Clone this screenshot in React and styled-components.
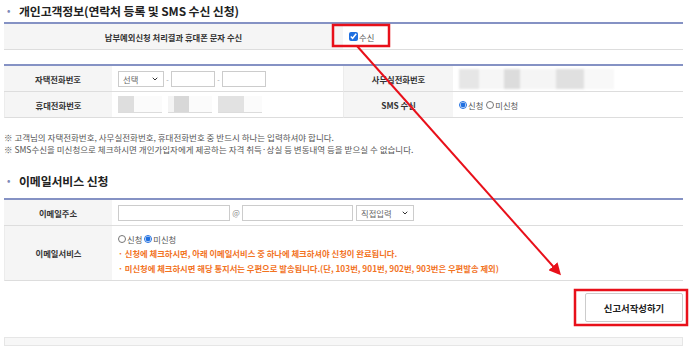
import React from 'react';
import styled, { createGlobalStyle } from 'styled-components';
import { ChevronDown } from 'lucide-react';

const GlobalStyle = createGlobalStyle`
  html, body {
    margin: 0;
    padding: 0;
    background: #ffffff;
  }
  body {
    font-family: "Noto Sans CJK KR", "Noto Sans", sans-serif;
    color: #333333;
    overflow: hidden;
  }
`;

const App = () => {
  return (
    <>
      <GlobalStyle />
      <Page>
        <SectionTitle>
          <Bullet>•</Bullet>개인고객정보(연락처 등록 및 SMS 수신 신청)
        </SectionTitle>

        <Table $cols="339px 1fr">
          <Label>납부예외신청 처리결과 휴대폰 문자 수신</Label>
          <Value>
            <Check type="checkbox" defaultChecked />
            <span>수신</span>
          </Value>
        </Table>

        <Table $cols="108px 231px 110px 1fr" $mt={14}>
          <Label>자택전화번호</Label>
          <Value>
            <FakeSelect $w={46}>
              선택
              <ChevronDown size={8} strokeWidth={3} color="#333" />
            </FakeSelect>
            <Dash>-</Dash>
            <TextBox $w={44} />
            <Dash>-</Dash>
            <TextBox $w={44} />
          </Value>
          <Label>사무실전화번호</Label>
          <Value>
            <BlurStrip>
              <Patch $w={20} $tone="#e6e6e6" />
              <Patch $w={25} $tone="#f6f6f6" />
              <Patch $w={16} $tone="#dcdcdc" />
              <Patch $w={36} $tone="#f5f5f5" />
              <Patch $w={28} $tone="#e0e0e0" />
              <Patch $w={30} $tone="#f8f8f8" />
            </BlurStrip>
          </Value>
          <Label>휴대전화번호</Label>
          <Value>
            <BlurBox $w={44}>
              <Patch $w={16} $tone="#dedede" />
            </BlurBox>
            <Gap />
            <BlurBox $w={44}>
              <Patch $w={6} $tone="#f4f4f4" />
              <Patch $w={15} $tone="#d8d8d8" />
            </BlurBox>
            <Gap />
            <BlurBox $w={44}>
              <Patch $w={26} $tone="#e2e2e2" />
            </BlurBox>
          </Value>
          <Label>SMS 수신</Label>
          <Value>
            <Radio type="radio" name="sms" defaultChecked />
            <span>신청</span>
            <Radio type="radio" name="sms" $ml={3} />
            <span>미신청</span>
          </Value>
        </Table>

        <Notes>
          <p>※ 고객님의 자택전화번호, 사무실전화번호, 휴대전화번호 중 반드시 하나는 입력하셔야 합니다.</p>
          <p>※ SMS수신을 미신청으로 체크하시면 개인가입자에게 제공하는 자격 취득·상실 등 변동내역 등을 받으실 수 없습니다.</p>
        </Notes>

        <SectionTitle $mt={15} $h={28}>
          <Bullet>•</Bullet>이메일서비스 신청
        </SectionTitle>

        <Table $cols="108px 1fr">
          <Label>이메일주소</Label>
          <Value>
            <TextBox $w={112} />
            <At>@</At>
            <TextBox $w={111} />
            <FakeSelect $w={58} $ml={3}>
              직접입력
              <ChevronDown size={8} strokeWidth={3} color="#333" />
            </FakeSelect>
          </Value>
          <Label>이메일서비스</Label>
          <Value $stack>
            <OptionLine>
              <Radio type="radio" name="mail" />
              <span>신청</span>
              <Radio type="radio" name="mail" $ml={2} defaultChecked />
              <span>미신청</span>
            </OptionLine>
            <Warn>· 신청에 체크하시면, 아래 이메일서비스 중 하나에 체크하셔야 신청이 완료됩니다.</Warn>
            <Warn>· 미신청에 체크하시면 해당 통지서는 우편으로 발송됩니다.(단, 103번, 901번, 902번, 903번은 우편발송 제외)</Warn>
          </Value>
        </Table>

        <ButtonRow>
          <SubmitButton>신고서작성하기</SubmitButton>
        </ButtonRow>

        <BottomBox />

        <Overlay width="700" height="346" viewBox="0 0 700 346">
          <defs>
            <marker id="head" markerWidth="6" markerHeight="6" refX="4.5" refY="3" orient="auto" markerUnits="strokeWidth">
              <path d="M0,0 L6,3 L0,6 Z" fill="#e8101a" />
            </marker>
          </defs>
          <rect x="333" y="25" width="56" height="21" fill="none" stroke="#e8101a" strokeWidth="2.5" />
          <line x1="357" y1="46" x2="559" y2="273" stroke="#e8101a" strokeWidth="2" markerEnd="url(#head)" />
          <rect x="575" y="290" width="112" height="35" fill="none" stroke="#e8101a" strokeWidth="2.5" />
        </Overlay>
      </Page>
    </>
  );
};

const Page = styled.div`
  position: relative;
  width: 679px;
  height: 346px;
  padding-left: 4px;
  display: flex;
  flex-direction: column;
`;

const SectionTitle = styled.h2`
  margin: ${(p) => p.$mt || 0}px 0 0 0;
  height: ${(p) => p.$h || 22}px;
  display: flex;
  align-items: ${(p) => (p.$h ? 'flex-start' : 'center')};
  font-size: 11.9px;
  font-weight: 700;
  color: #222222;
  letter-spacing: -0.1px;
  line-height: 22px;
`;

const Bullet = styled.span`
  display: inline-block;
  width: 15px;
  padding-left: 3px;
  box-sizing: border-box;
  color: #7d8ab8;
  font-size: 9px;
`;

const Table = styled.div`
  display: grid;
  grid-template-columns: ${(p) => p.$cols};
  margin-top: ${(p) => p.$mt || 0}px;
  border-top: 2px solid #8592c4;
`;

const Label = styled.div`
  display: flex;
  align-items: center;
  justify-content: center;
  background: #f5f5f5;
  border-bottom: 1px solid #dddddd;
  border-left: 1px solid #ececec;
  font-size: 8.3px;
  font-weight: 700;
  color: #333333;
  min-height: 25px;

  &:first-child {
    border-left: none;
  }
`;

const Value = styled.div`
  display: flex;
  flex-direction: ${(p) => (p.$stack ? 'column' : 'row')};
  align-items: ${(p) => (p.$stack ? 'flex-start' : 'center')};
  padding: ${(p) => (p.$stack ? '5px 6px 4px' : '0 6px')};
  border-bottom: 1px solid #dddddd;
  font-size: 8.3px;
  color: #555555;
  min-height: 25px;
`;

const Check = styled.input`
  width: 9px;
  height: 9px;
  margin: 0 1px 0 0;
  accent-color: #1f6fe0;
`;

const Radio = styled.input`
  width: 8px;
  height: 8px;
  margin: 0 1px 0 ${(p) => p.$ml || 0}px;
  accent-color: #1f6fe0;
`;

const FakeSelect = styled.div`
  box-sizing: border-box;
  width: ${(p) => p.$w}px;
  height: 16px;
  margin-left: ${(p) => p.$ml || 0}px;
  border: 1px solid #cccccc;
  padding: 0 4px 0 4px;
  display: flex;
  align-items: center;
  justify-content: space-between;
  font-size: 8.3px;
  color: #666666;
  background: #ffffff;
`;

const TextBox = styled.div`
  box-sizing: border-box;
  width: ${(p) => p.$w}px;
  height: 16px;
  border: 1px solid #cccccc;
  background: #ffffff;
`;

const Dash = styled.span`
  width: 7px;
  text-align: center;
  color: #999999;
  font-size: 7px;
`;

const At = styled.span`
  width: 12px;
  text-align: center;
  color: #888888;
  font-size: 8px;
`;

const Gap = styled.span`
  width: 6px;
`;

const BlurBox = styled.div`
  box-sizing: border-box;
  width: ${(p) => p.$w}px;
  height: 17px;
  border-bottom: 1px solid #dcdcdc;
  display: flex;
  align-items: stretch;
  background: #fbfbfb;
  filter: blur(0.6px);
`;

const BlurStrip = styled.div`
  height: 20px;
  display: flex;
  background: #fafafa;
  filter: blur(1px);
`;

const Patch = styled.span`
  width: ${(p) => p.$w}px;
  background: ${(p) => p.$tone};
`;

const Notes = styled.div`
  margin-top: 13px;
  font-size: 8.5px;
  color: #555555;
  line-height: 12px;

  p {
    margin: 0;
    white-space: nowrap;
  }
`;

const OptionLine = styled.div`
  display: flex;
  align-items: center;
  height: 15px;
`;

const Warn = styled.div`
  height: 15px;
  line-height: 15px;
  font-size: 8.3px;
  font-weight: 700;
  color: #f2731f;
  white-space: nowrap;
`;

const ButtonRow = styled.div`
  display: flex;
  justify-content: flex-end;
  margin-top: 12px;
`;

const SubmitButton = styled.button`
  box-sizing: border-box;
  width: 98px;
  height: 29px;
  border: 1px solid #cccccc;
  border-radius: 2px;
  background: #ffffff;
  font-family: "Noto Sans CJK KR", sans-serif;
  font-size: 9.4px;
  font-weight: 700;
  color: #222222;
  cursor: pointer;
`;

const BottomBox = styled.div`
  margin-top: 15px;
  flex: 1;
  background: #f7f7f7;
  border: 1px solid #e6e6e6;
`;

const Overlay = styled.svg`
  position: absolute;
  top: 0;
  left: 0;
  pointer-events: none;
`;

export default App;
